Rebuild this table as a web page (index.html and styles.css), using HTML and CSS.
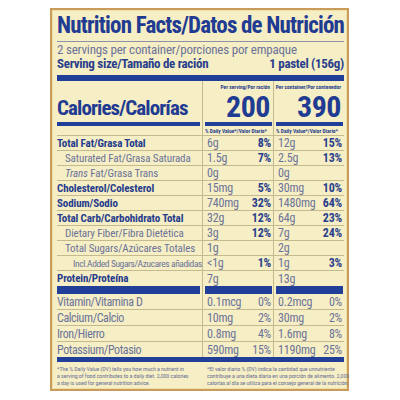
FILE: index.html
```html
<!DOCTYPE html>
<html lang="en">
<head>
    <meta charset="UTF-8">
    <meta name="viewport" content="width=device-width, initial-scale=1.0">
    <title>Nutrition Facts</title>
    <link rel="stylesheet" href="styles.css">
</head>
<body>
    <div class="label">
        <h1 class="title">Nutrition Facts/Datos de Nutrición</h1>
        <p class="servings">2 servings per container/porciones por empaque</p>
        <div class="serving-size">
            <span>Serving size/Tamaño de ración</span>
            <span>1 pastel (156g)</span>
        </div>
        <div class="top-bar"></div>

        <div class="row cal">
            <div class="name"><span>Calories/Calorías</span></div>
            <div class="col"><span class="per">Per serving/Por ración</span><span class="big">200</span></div>
            <div class="col"><span class="per">Per container/Por contenedor</span><span class="big">390</span></div>
        </div>
        <div class="row bars thin">
            <div class="name"><i></i></div>
            <div class="col"><i></i></div>
            <div class="col"><i></i></div>
        </div>
        <div class="row dv">
            <div class="name"></div>
            <div class="col"><span>% Daily Value*/Valor Diario*</span></div>
            <div class="col"><span>% Daily Value*/Valor Diario*</span></div>
        </div>

        <div class="row main">
            <div class="name"><span>Total Fat/Grasa Total</span></div>
            <div class="col"><span>6g</span><b>8%</b></div>
            <div class="col"><span>12g</span><b>15%</b></div>
        </div>
        <div class="row sub">
            <div class="name"><span>Saturated Fat/Grasa Saturada</span></div>
            <div class="col"><span>1.5g</span><b>7%</b></div>
            <div class="col"><span>2.5g</span><b>13%</b></div>
        </div>
        <div class="row sub">
            <div class="name"><span><em>Trans</em> Fat/Grasa Trans</span></div>
            <div class="col"><span>0g</span></div>
            <div class="col"><span>0g</span></div>
        </div>
        <div class="row main">
            <div class="name"><span>Cholesterol/Colesterol</span></div>
            <div class="col"><span>15mg</span><b>5%</b></div>
            <div class="col"><span>30mg</span><b>10%</b></div>
        </div>
        <div class="row main">
            <div class="name"><span>Sodium/Sodio</span></div>
            <div class="col"><span>740mg</span><b>32%</b></div>
            <div class="col"><span>1480mg</span><b>64%</b></div>
        </div>
        <div class="row main">
            <div class="name"><span>Total Carb/Carbohidrato Total</span></div>
            <div class="col"><span>32g</span><b>12%</b></div>
            <div class="col"><span>64g</span><b>23%</b></div>
        </div>
        <div class="row sub">
            <div class="name"><span>Dietary Fiber/Fibra Dietética</span></div>
            <div class="col"><span>3g</span><b>12%</b></div>
            <div class="col"><span>7g</span><b>24%</b></div>
        </div>
        <div class="row sub">
            <div class="name"><span>Total Sugars/Azúcares Totales</span></div>
            <div class="col"><span>1g</span></div>
            <div class="col"><span>2g</span></div>
        </div>
        <div class="row sub added">
            <div class="name"><span>Incl.Added Sugars/Azucares añadidas</span></div>
            <div class="col"><span>&lt;1g</span><b>1%</b></div>
            <div class="col"><span>1g</span><b>3%</b></div>
        </div>
        <div class="row main last">
            <div class="name"><span>Protein/Proteína</span></div>
            <div class="col"><span>7g</span></div>
            <div class="col"><span>13g</span></div>
        </div>
        <div class="row bars thick">
            <div class="name"><i></i></div>
            <div class="col"><i></i></div>
            <div class="col"><i></i></div>
        </div>

        <div class="row vit">
            <div class="name"><span>Vitamin/Vitamina D</span></div>
            <div class="col"><span>0.1mcg</span><span>0%</span></div>
            <div class="col"><span>0.2mcg</span><span>0%</span></div>
        </div>
        <div class="row vit">
            <div class="name"><span>Calcium/Calcio</span></div>
            <div class="col"><span>10mg</span><span>2%</span></div>
            <div class="col"><span>30mg</span><span>2%</span></div>
        </div>
        <div class="row vit">
            <div class="name"><span>Iron/Hierro</span></div>
            <div class="col"><span>0.8mg</span><span>4%</span></div>
            <div class="col"><span>1.6mg</span><span>8%</span></div>
        </div>
        <div class="row vit last">
            <div class="name"><span>Potassium/Potasio</span></div>
            <div class="col"><span>590mg</span><span>15%</span></div>
            <div class="col"><span>1190mg</span><span>25%</span></div>
        </div>
        <div class="bottom-bar"></div>

        <div class="footnote">
            <p>*The % Daily Value (DV) tells you how much a nutrient in<br>a serving of food contributes to a daily diet. 2,000 calories<br>a day is used for general nutrition advice.</p>
            <p>*El valor diario % (DV) indica la cantidad que unnutriente<br>contribuye a una dieta diaria en una porción de alimento. 2,000<br>calorías al día se utiliza para el consejo general de la nutrición.</p>
        </div>
    </div>
</body>
</html>
```
FILE: styles.css
```css
* {
    margin: 0;
    padding: 0;
    box-sizing: border-box;
}
body {
    background: #fff;
    font-family: "Roboto Condensed", "Open Sans", sans-serif;
    color: #6b7399;
}
.label {
    margin: 8px 0 0 50px;
    width: 299px;
    height: 383px;
    border: 2px solid #c99c5c;
    padding: 0 3px 0 5px;
    background: #f6eec5;
    box-shadow: inset 0 0 0 1px #efe0a8;
}
.title {
    height: 32px;
    line-height: 31px;
    font-size: 23px;
    font-weight: 700;
    letter-spacing: -0.8px;
    color: #1f3b92;
    border-bottom: 1px solid #8c90a8;
    white-space: nowrap;
}
.servings {
    font-size: 13px;
    line-height: 15px;
    letter-spacing: -0.2px;
}
.serving-size {
    display: flex;
    justify-content: space-between;
    font-size: 13px;
    line-height: 14px;
    font-weight: 700;
    letter-spacing: -0.3px;
    color: #2a3f8c;
}
.top-bar {
    height: 6px;
    margin-top: 4px;
    background: #213f98;
}
.bottom-bar {
    height: 5px;
    background: #213f98;
}

/* table rows: label column + two value columns */
.row {
    display: grid;
    grid-template-columns: 145px 71px 71px;
}
.row > div {
    display: flex;
    align-items: center;
    white-space: nowrap;
}
.row .col {
    justify-content: space-between;
    padding: 0 2px 0 4px;
    border-left: 1px solid #c5b98f;
    font-size: 12px;
    letter-spacing: -0.2px;
}
.row .col b {
    font-weight: 700;
    color: #2a3f8c;
}

.cal {
    height: 41px;
}
.row.cal .name {
    align-items: flex-end;
    padding-bottom: 3px;
    font-size: 21px;
    line-height: 21px;
    font-weight: 700;
    letter-spacing: -0.9px;
    color: #1f3b92;
}
.row.cal .col {
    flex-direction: column;
    align-items: flex-end;
    justify-content: space-between;
    padding: 3px 3px 1px 0;
    color: #2a3f8c;
}
.per {
    font-size: 5.5px;
    line-height: 6px;
    font-weight: 700;
    letter-spacing: 0;
}
.big {
    font-size: 30px;
    line-height: 28px;
    font-weight: 700;
    letter-spacing: -0.5px;
    color: #1f3b92;
}

.bars i {
    display: block;
    width: 100%;
    background: #213f98;
}
.bars .name i {
    margin-right: 2px;
}
.bars .col i {
    margin: 0 1px 0 2px;
}
.row.bars .col {
    padding: 0;
}
.bars.thin,
.bars.thin i {
    height: 4px;
}
.bars.thick,
.bars.thick i {
    height: 8px;
}

.dv {
    height: 10px;
}
.dv > div {
    border-bottom: 1px solid #c5b98f;
}
.row.dv .col {
    padding: 0 0 0 2px;
    font-size: 5.5px;
    font-weight: 700;
    letter-spacing: 0;
    color: #2a3f8c;
}

.main,
.sub {
    height: 15px;
}
.main > div,
.sub > div,
.vit > div {
    border-bottom: 1px solid #c5b98f;
}
.row.last > div {
    border-bottom: none;
}
.main .name {
    font-size: 11px;
    font-weight: 700;
    letter-spacing: -0.1px;
    color: #263c8c;
}
.sub .name {
    padding-left: 8px;
    font-size: 11px;
    letter-spacing: -0.1px;
}
.sub.added .name {
    padding-left: 16px;
    font-size: 9.5px;
    letter-spacing: -0.4px;
}
.vit {
    height: 16px;
}
.vit.last {
    height: 15px;
}
.vit .name {
    font-size: 12px;
    letter-spacing: -0.4px;
}

.footnote {
    display: grid;
    grid-template-columns: 148px 139px;
    padding-top: 3px;
}
.footnote p {
    font-size: 6px;
    line-height: 7px;
    white-space: nowrap;
    letter-spacing: -0.1px;
}
.footnote p + p {
    padding-left: 2px;
}
```
